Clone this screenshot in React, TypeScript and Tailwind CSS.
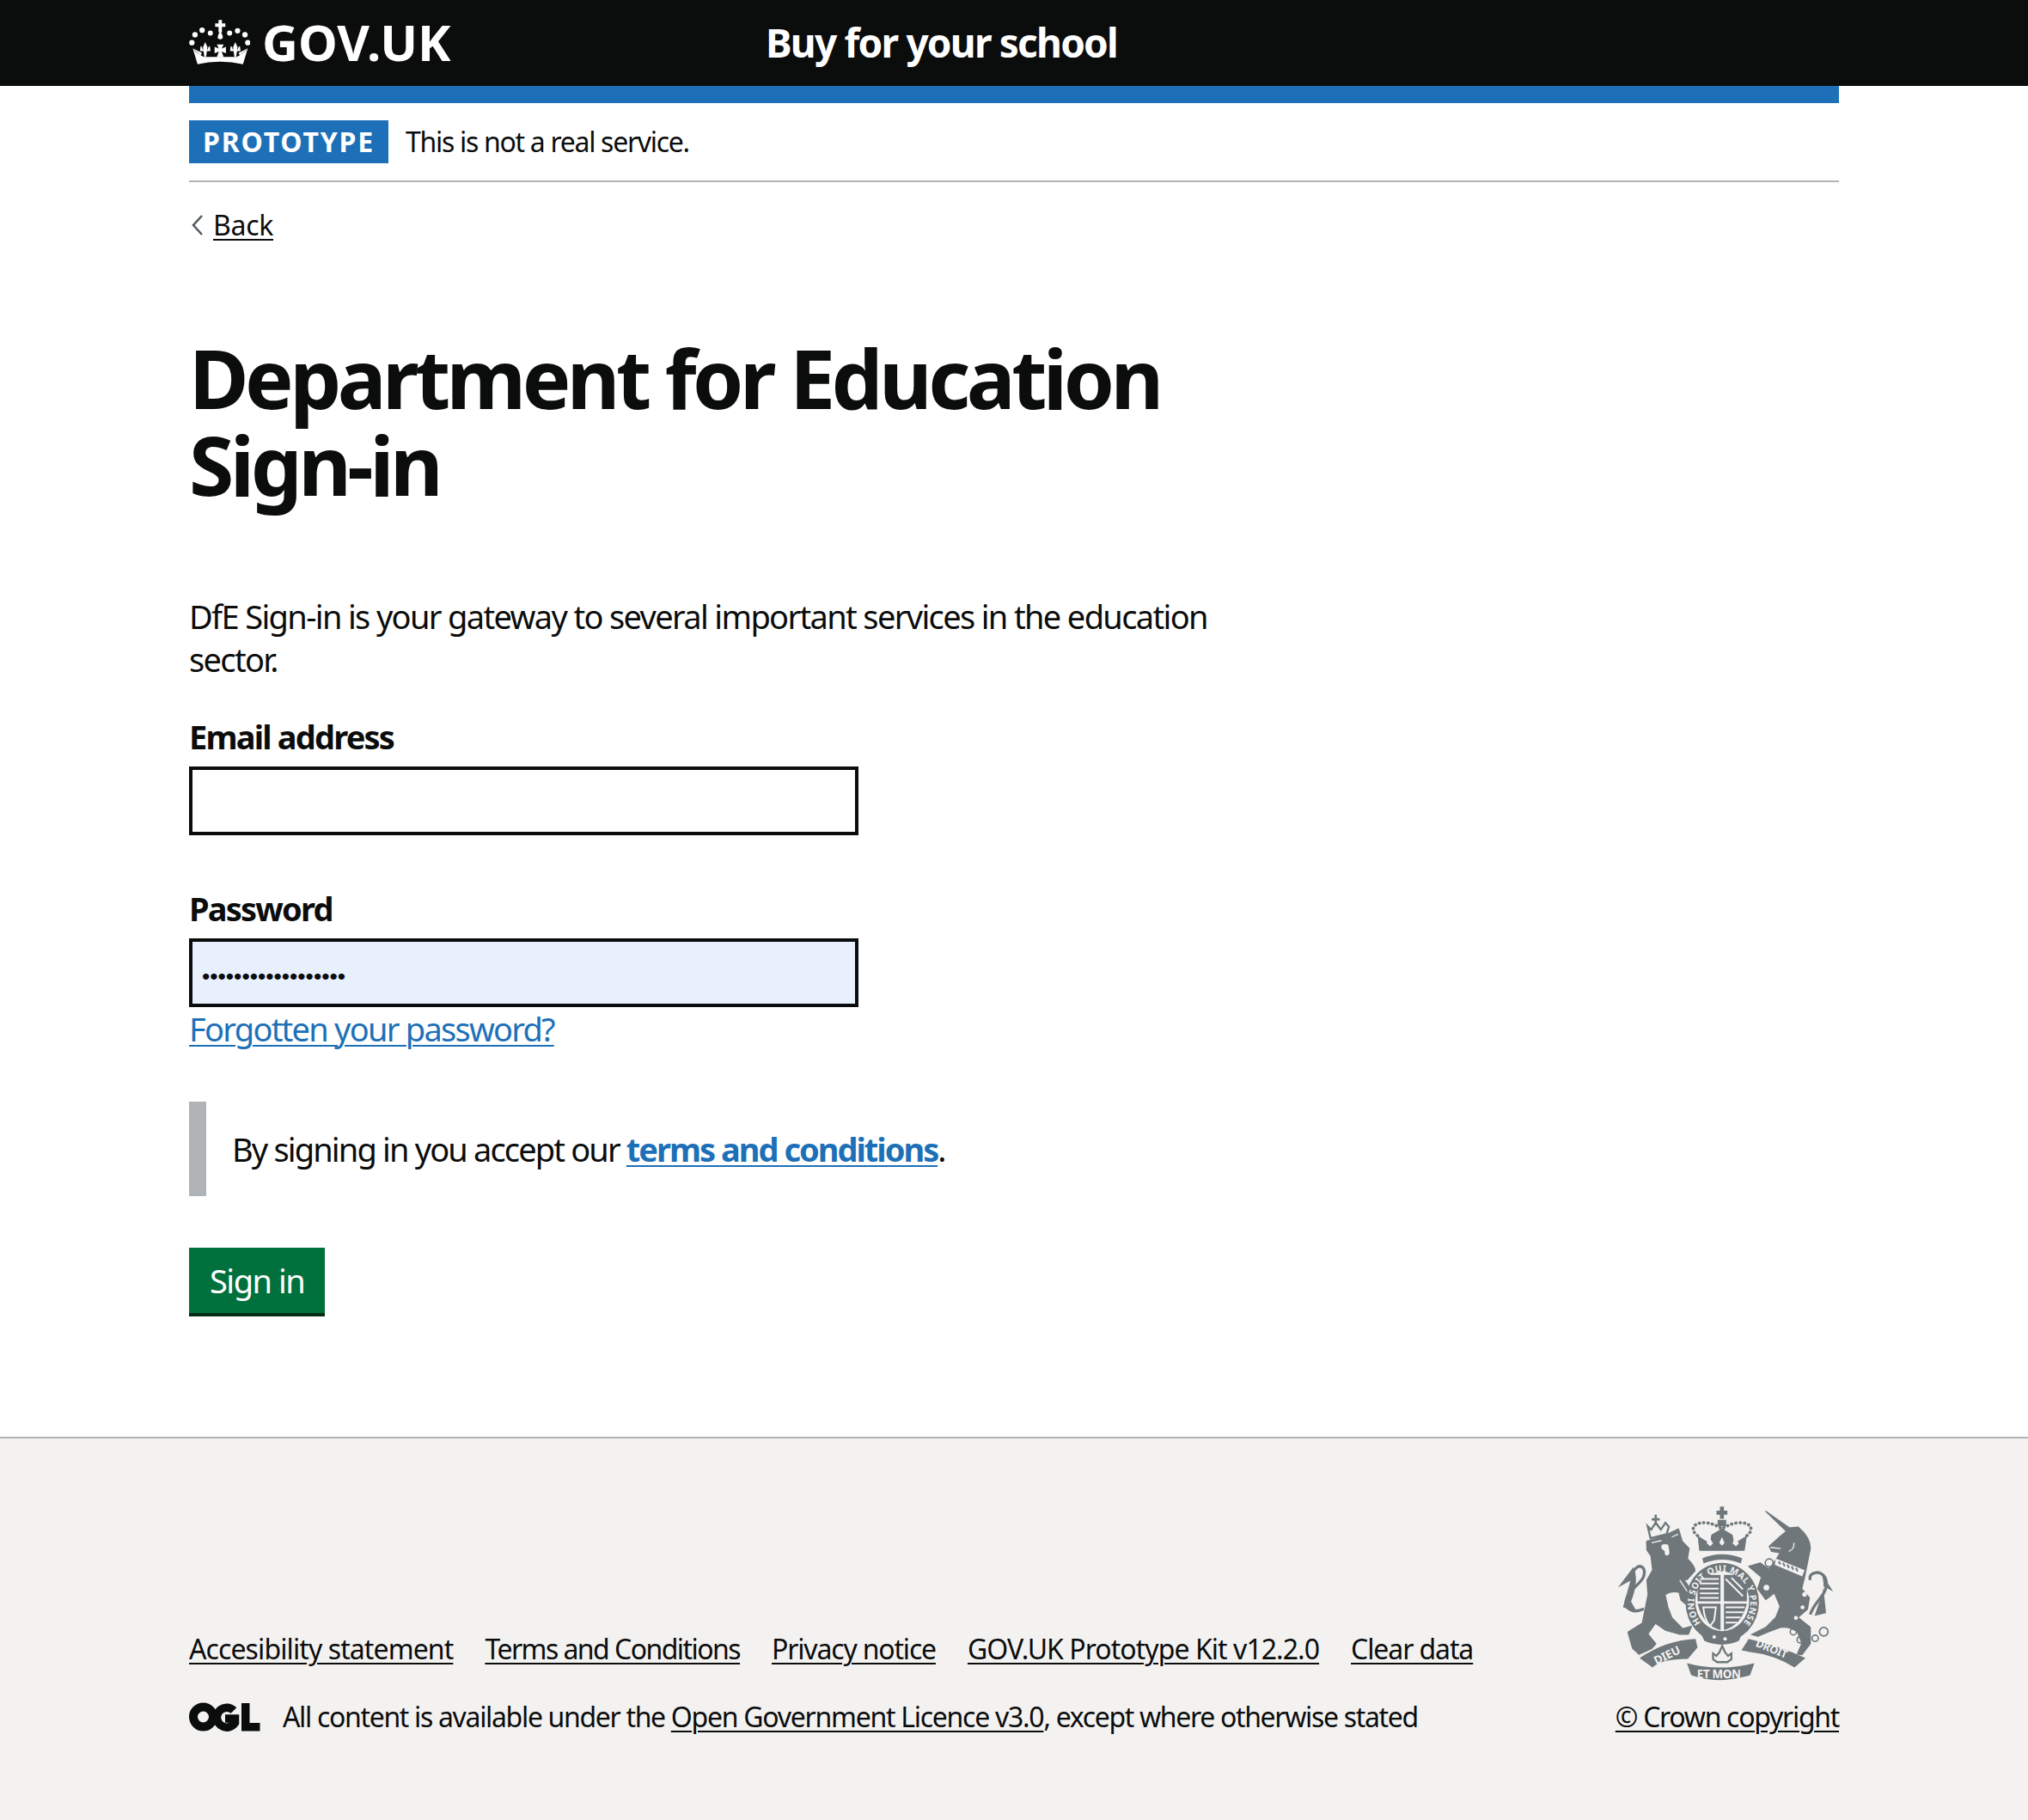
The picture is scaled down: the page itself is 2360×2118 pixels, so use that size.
import React from 'react'

const font = "font-['Noto_Sans','Liberation_Sans',sans-serif]"

const GovCrown = () => (
  <svg width="71" height="52" viewBox="15 20 215 156" fill="#fff">
    <path d="M119 20h12v12h12v12h-12v20h-12V44h-12V32h12z" />
    <path d="M125 60q12 16 8 24q-8 8-16 0q-4-8 8-24z" />
    <circle cx="90" cy="66" r="9" />
    <circle cx="61" cy="56" r="9.500" />
    <circle cx="36" cy="72" r="9.500" />
    <circle cx="25" cy="100" r="9.500" />
    <circle cx="158" cy="66" r="9" />
    <circle cx="186" cy="58" r="9.500" />
    <circle cx="212" cy="72" r="9.500" />
    <circle cx="222" cy="100" r="9.500" />
    <path d="M28 120C40 134 52 144 68 150H182C197 144 210 134 222 120L205 176Q125 158 45 176Z" />
    <path d="M72 98l8 18-5 34h-6l-5-34zM54 124h36v6H54zM56 112q8 4 6 12h-8zM88 112q-8 4-6 12h8zM178 98l8 18-5 34h-6l-5-34zM160 124h36v6h-36zM162 112q8 4 6 12h-8zM194 112q-8 4-6 12h8z" />
    <path d="M113 106h24l-7 15 15-6v22l-15-6 7 20h-24l7-20-15 6v-22l15 6z" />
    <path d="M28 120l28 26 4-10zM222 120l-28 26-4-10z" />
  </svg>
)

const OglLogo = () => (
  <svg width="83" height="34" viewBox="0 0 83 34" fill="none">
    <circle cx="16.500" cy="17" r="11.500" stroke="#0b0c0c" strokeWidth="10" />
    <path d="M52 9.500a11.500 11.500 0 1 0 1.500 14.500V19H42" stroke="#0b0c0c" strokeWidth="9.500" />
    <path d="M61 1h9.500v23H82.500v9.500H61z" fill="#0b0c0c" />
  </svg>
)

const grey = '#6f777b'
const paper = '#f3f2f1'

const CoatOfArms = () => (
  <svg width="257" height="207" viewBox="60 40 770 620" fill={grey} fontFamily="Noto Sans, sans-serif" fontWeight="700">
    {/* lion */}
    <path stroke={grey} strokeWidth="5" strokeLinejoin="round" d="M175 165Q230 150 285 122L298 165L322 190L316 225Q345 255 342 268L315 298L302 296Q330 330 342 372L322 392L295 370L288 342Q262 335 238 350L248 395L262 432L300 470L330 462L320 488L288 488L240 474L205 450L178 488L206 522L192 538L148 558L126 538L110 482L160 450Q170 400 180 350L176 300L196 265L190 215L176 195Z" />
    <path d="M226 178q14-6 24 0l4 24q0 14-10 12q-8-2-6-14l-12-10z" fill={paper} />
    <path d="M192 170l34-8M262 150l22-10M290 300l40 60" fill="none" stroke={paper} strokeWidth="4" />
    <path d="M165 400C120 420 85 395 112 350C135 315 175 300 165 262C150 240 130 260 125 280" fill="none" stroke={grey} strokeWidth="10" />
    <path d="M128 255L75 325L118 302L92 395L140 410L120 375Q150 300 128 255Z" />
    <path d="M178 112l12 12 16-24 18 24 16-24 12 14-8 26-56 14z" fill={paper} stroke={grey} strokeWidth="7" />
    <path d="M202 72h8v12h10v8h-10v10h-8V92h-10v-8h10z" />
    {/* unicorn */}
    <path stroke={grey} strokeWidth="4" strokeLinejoin="round" d="M602 182L640 148L662 130L590 60L672 118L702 115Q745 150 745 190L735 240L725 290L715 330L742 362L735 402L702 430L745 465L745 522L716 560L700 558L716 520L700 480Q670 460 640 465L600 480L562 496L540 490L590 465L625 430L640 392L620 345L590 368L562 330L575 290L530 252L570 240L600 262L625 230L640 205L610 200Z" />
    <path d="M606 186l36 4M670 200q20-6 18-30" fill="none" stroke={paper} strokeWidth="4" />
    <path d="M625 225l100 40-8 22-96-40z" fill={paper} />
    <path d="M635 235l6 10M650 240l6 12M665 246l6 12M680 252l6 12M695 258l6 12" stroke={grey} strokeWidth="6" />
    <path d="M745 300C735 270 790 260 800 300C810 350 760 370 745 420" fill="none" stroke={grey} strokeWidth="10" />
    <path d="M780 270L825 340L790 320L800 415L760 425L775 380Q805 320 780 270Z" />
    <g fill={paper}>
      <circle cx="725" cy="350" r="8" />
      <circle cx="718" cy="395" r="7" />
      <circle cx="695" cy="432" r="7" />
      <circle cx="602" cy="240" r="10" />
      <circle cx="592" cy="326" r="10" />
    </g>
    <g fill="none" stroke={grey} strokeWidth="5">
      <circle cx="686" cy="480" r="11" />
      <circle cx="710" cy="508" r="11" />
      <circle cx="762" cy="503" r="11" />
      <circle cx="792" cy="480" r="15" />
      <circle cx="602" cy="240" r="14" />
      <circle cx="592" cy="326" r="14" />
    </g>
    {/* crown */}
    <path d="M358 198L352 145L395 172L400 142L437 120L474 142L480 172L524 145L516 198Z" />
    <path d="M365 222q72-30 146 0l-6 24q-67-28-134 0z" stroke={paper} strokeWidth="6" />
    <path d="M352 145C325 125 335 100 375 100C405 100 425 115 437 120C450 115 470 100 500 100C540 100 550 125 524 145" fill="none" stroke={grey} strokeWidth="11" strokeDasharray="1 14" strokeLinecap="round" />
    <path d="M430 44h14v14h12v14h-12v14h-14V72h-12V58h12z" />
    <rect x="422" y="90" width="30" height="22" />
    <path d="M429 118h5v32h-5zM441 118h5v32h-5z" />
    <path d="M392 150l-8 22 12 10 10-10zM482 150l-8 22 12 10 10-10zM437 150l-9 20 9 10 9-10z" fill={paper} />
    {/* shield and garter */}
    <ellipse cx="438" cy="378" rx="128" ry="138" />
    <ellipse cx="438" cy="374" rx="94" ry="104" fill={paper} />
    <g>
      <path d="M352 282h80v92h-80z" />
      <path d="M444 282h80v92h-80z" />
      <path d="M352 382h80v92q-60-15-80-92z" />
      <path d="M444 382h80q-20 77-80 92z" />
    </g>
    <g stroke={paper} strokeWidth="6">
      <path d="M360 296h66M360 312h66M360 330h66M360 346h66M360 362h66" />
      <path d="M450 395h66M450 412h62M450 430h52M450 448h40" />
      <path d="M450 296l60 60M470 292l40 40" />
      <path d="M372 395l44 0l-6 45l-14 20q-20-20-24-65z" fill="none" />
    </g>
    <defs>
      <path id="garter-ring" d="M364 449A98 108 0 1 1 512 449" fill="none" />
    </defs>
    <text fontSize="31" fill={paper}>
      <textPath href="#garter-ring" textLength="476" lengthAdjust="spacing">HONI SOIT QUI MAL Y PENSE</textPath>
    </text>
    <path d="M360 480q78 50 150 0l-14 32q-60 26-120 0z" />
    <circle cx="410" cy="498" r="6" fill={paper} />
    <circle cx="448" cy="505" r="6" fill={paper} />
    {/* motto */}
    <path d="M150 572Q240 510 345 505L352 535L318 575Q225 575 195 605Z" />
    <path d="M530 505Q640 530 728 572L690 605Q620 560 530 550L505 545Z" />
    <path d="M315 590Q425 620 550 590L535 632Q425 665 330 632Z" />
    <path d="M438 530l10 22 10 12 12-8 0 20-14 10h-36l-14-10 0-20 12 8 10-12z" fill={paper} stroke={grey} strokeWidth="7" />
    <text x="208" y="596" fontSize="40" fill={paper} transform="rotate(-26 208 596)">DIEU</text>
    <text x="350" y="642" fontSize="40" fill={paper} letterSpacing="-1">ET MON</text>
    <text x="552" y="530" fontSize="38" fill={paper} letterSpacing="-1" transform="rotate(22 552 530)">DROIT</text>
  </svg>
)

const FooterLink = ({ className, children }: { className?: string; children: React.ReactNode }) => (
  <a href="#" className={`text-[#0b0c0c] underline underline-offset-[4px] decoration-2 ${className ?? ''}`}>
    {children}
  </a>
)

export default function App() {
  return (
    <div className={`${font} min-h-[2118px] bg-white text-[#0b0c0c] flex flex-col`}>
      <header className="h-[100px] bg-[#0b0c0c] text-white">
        <div className="w-[1920px] mx-auto h-full flex items-center">
          <a href="#" className="flex items-center w-[671px] shrink-0 -mt-[2px]">
            <GovCrown />
            <span className="ml-[14px] text-[58px] font-bold leading-none">GOV.UK</span>
          </a>
          <span className="text-[46px] font-bold tracking-[-1.8px] -mt-[2px]">Buy for your school</span>
        </div>
      </header>

      <main className="w-[1920px] mx-auto">
        <div className="h-[20px] bg-[#1d70b8]" />
        <div className="py-[20px] border-b-2 border-[#b1b4b6] flex items-center">
          <strong className="h-[50px] w-[232px] flex items-center justify-center bg-[#1d70b8] text-white text-[32px] tracking-[1.8px] leading-none">
            PROTOTYPE
          </strong>
          <span className="ml-[20px] text-[32px] tracking-[-1.3px]">This is not a real service.</span>
        </div>

        <a href="#" className="mt-[30px] h-[40px] flex items-center text-[32px] w-fit tracking-[-0.3px]">
          <svg width="16" height="24" viewBox="0 0 16 24" fill="none" className="ml-[2px] mr-[10px]">
            <path d="M13 1L3 12l10 11" stroke="#505a5f" strokeWidth="2.500" />
          </svg>
          <span className="underline underline-offset-[4px] decoration-2">Back</span>
        </a>

        <h1 className="mt-[107px] w-[1280px] text-[95px] leading-[101px] font-bold tracking-[-4.55px]">
          Department for Education Sign-in
        </h1>

        <p className="mt-[101px] w-[1280px] text-[38px] leading-[50px] tracking-[-1.65px]">
          DfE Sign-in is your gateway to several important services in the education sector.
        </p>

        <label className="block mt-[40px] text-[38px] leading-[50px] font-bold tracking-[-1.8px]">Email address</label>
        <input
          type="text"
          className="block mt-[10px] w-[779px] h-[80px] border-4 border-[#0b0c0c] bg-white outline-none"
        />

        <label className="block mt-[60px] text-[38px] leading-[50px] font-bold tracking-[-1.8px]">Password</label>
        <input
          type="password"
          readOnly
          defaultValue="••••••••••••••••••"
          className="block mt-[10px] w-[779px] h-[80px] border-4 border-[#0b0c0c] bg-[#e8f0fe] px-[11px] pt-[9px] text-[26.5px] outline-none font-['Liberation_Sans']"
        />
        <a href="#" className="block w-fit text-[38px] leading-[50px] text-[#1d70b8] underline underline-offset-[4px] decoration-2 tracking-[-1.75px]">
          Forgotten your password?
        </a>

        <div className="mt-[60px] h-[110px] border-l-[20px] border-[#b1b4b6] pl-[30px] flex items-center text-[38px] tracking-[-1.85px]">
          <span>
            By signing in you accept our{' '}
            <a href="#" className="font-bold text-[#1d70b8] underline underline-offset-[4px] decoration-2 tracking-[-2px]">
              terms and conditions
            </a>
            .
          </span>
        </div>

        <button className="mt-[60px] block h-[80px] px-[24px] pb-[4px] bg-[#00703c] text-white text-[38px] shadow-[inset_0_-4px_0_#002d18] tracking-[-1.5px]">
          Sign in
        </button>
      </main>

      <footer className="mt-[140px] flex-1 bg-[#f3f2f1] border-t-2 border-[#b1b4b6] text-[32px] leading-[40px]">
        <div className="w-[1920px] mx-auto pt-[78px] flex items-end justify-between">
          <div>
            <ul className="flex gap-[37px]">
              <li><FooterLink className="tracking-[-0.9px]">Accesibility statement</FooterLink></li>
              <li><FooterLink className="tracking-[-1.55px]">Terms and Conditions</FooterLink></li>
              <li><FooterLink className="tracking-[-1.18px]">Privacy notice</FooterLink></li>
              <li><FooterLink className="tracking-[-0.95px]">GOV.UK Prototype Kit v12.2.0</FooterLink></li>
              <li><FooterLink className="tracking-[-1.1px]">Clear data</FooterLink></li>
            </ul>
            <div className="mt-[39px] flex items-center">
              <OglLogo />
              <span className="ml-[26px] tracking-[-1.33px]">
                All content is available under the <FooterLink className="tracking-[-1.27px]">Open Government Licence v3.0</FooterLink>, except where otherwise stated
              </span>
            </div>
          </div>
          <div className="flex flex-col items-end">
            <div className="mr-[5px]"><CoatOfArms /></div>
            <div className="mt-[19px]"><FooterLink className="tracking-[-1.3px]">© Crown copyright</FooterLink></div>
          </div>
        </div>
      </footer>
    </div>
  )
}
